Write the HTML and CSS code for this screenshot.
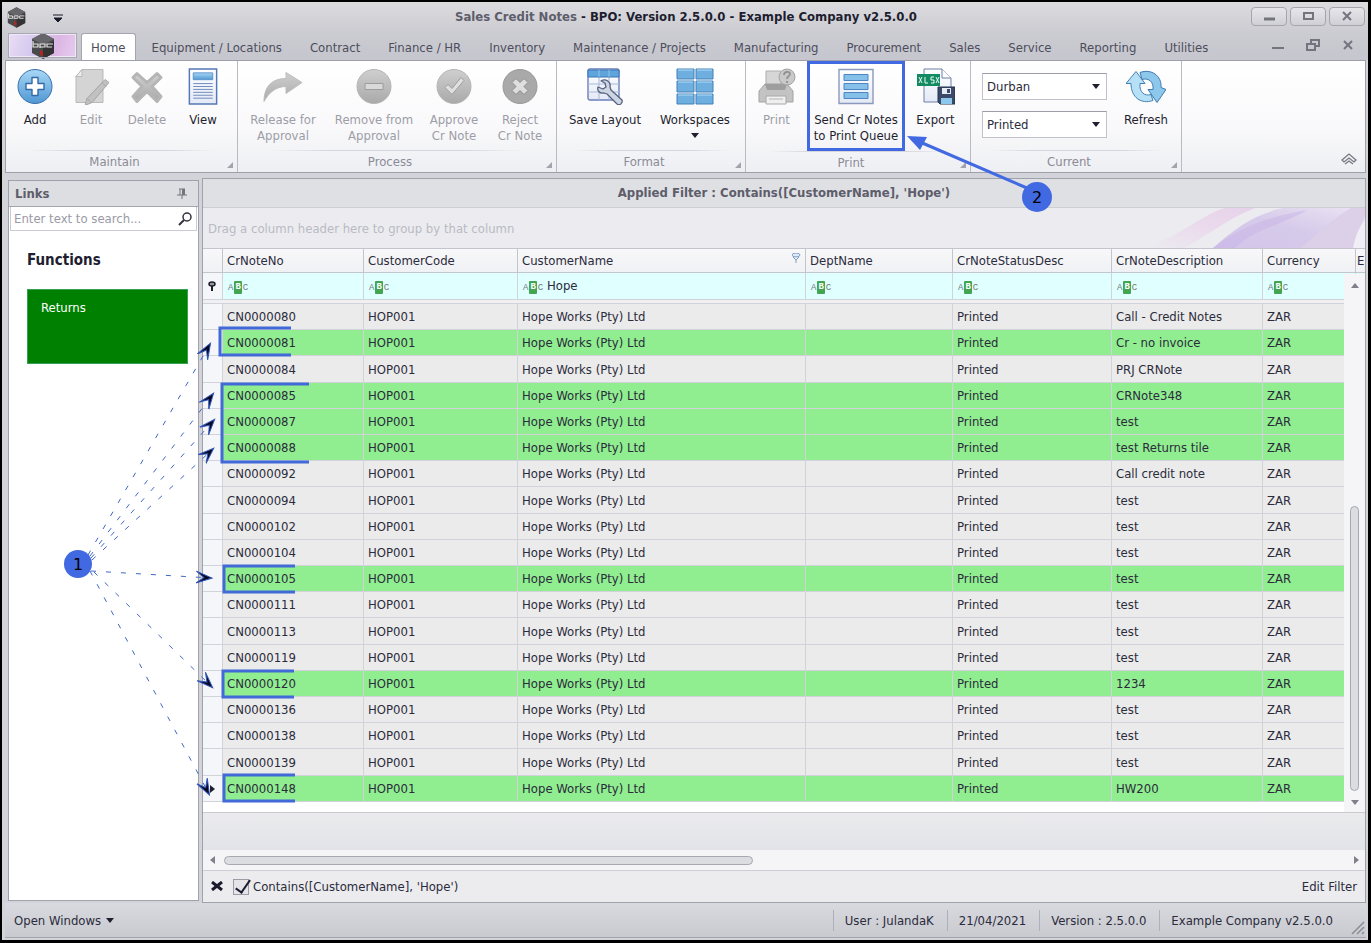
FILE: index.html
```html
<!DOCTYPE html>
<html lang="en">
  <head>
    <meta charset="UTF-8" />
    <meta name="viewport" content="width=device-width, initial-scale=1.0" />
    <title>Sales Credit Notes - BPO</title>
    <link rel="stylesheet" href="styles.css">
  </head>
  <body>
    <svg class="defs" width="0" height="0" aria-hidden="true">
      <defs>
        <linearGradient id="blue" x1="0" y1="0" x2="0" y2="1">
          <stop offset="0" stop-color="#a9d8f5" />
          <stop offset="1" stop-color="#4f97d3" />
        </linearGradient>
        <linearGradient id="gray" x1="0" y1="0" x2="0" y2="1">
          <stop offset="0" stop-color="#cfcfcf" />
          <stop offset="1" stop-color="#a9a9a9" />
        </linearGradient>
        <linearGradient id="paper" x1="0" y1="0" x2="0" y2="1">
          <stop offset="0" stop-color="#ffffff" />
          <stop offset="1" stop-color="#e3e9f6" />
        </linearGradient>
        <symbol id="logo" viewBox="0 0 24 26">
          <path d="M12 0 23 6v14l-11 6L1 20V6z" fill="#4a4a4c" />
          <path d="M12 0 23 6l-11 6L1 6z" fill="#66666a" />
          <path d="M12 14 23 8v12l-11 6z" fill="#333336" />
          <path d="M2 8v6h5v-3H2M9 15v-4h5v3H9M21 14h-5v-3h6" fill="none" stroke="#e4e4e4" stroke-width="1.2" />
          <path d="M9 17l3 2v4l-3-1z" fill="#b3261e" />
        </symbol>
      </defs>
    </svg>

    <div class="window">
      <header class="titlebar">
        <div class="quick">
          <svg width="19" height="21"><use href="#logo" /></svg>
          <svg width="10" height="8"><path d="M0 1h10M1 4h8L5 8z" fill="#1b1b2e" stroke="#1b1b2e" /></svg>
        </div>
        <h1><span>Sales Credit Notes</span> - BPO: Version 2.5.0.0 - Example Company v2.5.0.0</h1>
        <div class="win-buttons">
          <button aria-label="Minimize"><svg width="14" height="12"><path d="M2 9h11" stroke="#74747f" stroke-width="3" /></svg></button>
          <button aria-label="Maximize"><svg width="14" height="12"><path d="M3 3h9v6H3z" fill="none" stroke="#74747f" stroke-width="2" /></svg></button>
          <button aria-label="Close"><svg width="14" height="12"><path d="M3 2l8 8M11 2l-8 8" stroke="#74747f" stroke-width="2" /></svg></button>
        </div>
      </header>

      <nav class="tabs">
        <button class="app-button" aria-label="Application menu"><svg width="24" height="26"><use href="#logo" /></svg></button>
        <a href="#" class="active">Home</a>
        <a href="#">Equipment / Locations</a>
        <a href="#">Contract</a>
        <a href="#">Finance / HR</a>
        <a href="#">Inventory</a>
        <a href="#">Maintenance / Projects</a>
        <a href="#">Manufacturing</a>
        <a href="#">Procurement</a>
        <a href="#">Sales</a>
        <a href="#">Service</a>
        <a href="#">Reporting</a>
        <a href="#">Utilities</a>
        <div class="child-buttons">
          <button aria-label="Minimize child"><svg width="14" height="12"><path d="M1 9h12" stroke="#74747f" stroke-width="2" /></svg></button>
          <button aria-label="Restore child"><svg width="14" height="12"><path d="M5 4V1h8v6h-3M1 5h8v6H1z" fill="none" stroke="#74747f" stroke-width="2" /></svg></button>
          <button aria-label="Close child"><svg width="14" height="12"><path d="M3 2l8 8M11 2l-8 8" stroke="#74747f" stroke-width="2" /></svg></button>
        </div>
      </nav>

      <div class="ribbon">
        <section class="group maintain">
          <div class="items">
            <button class="small">
              <svg width="36" height="36" viewBox="0 0 36 36">
                <circle cx="18" cy="18" r="17" fill="url(#blue)" stroke="#3a6fae" />
                <path d="M15 9h6v6h6v6h-6v6h-6v-6H9v-6h6z" fill="#fff" stroke="#3569a8" stroke-width="1.4" stroke-linejoin="round" />
              </svg>
              Add
            </button>
            <button class="small" disabled>
              <svg width="36" height="36" viewBox="0 0 36 36">
                <path d="M9 1h21v33H3V8z" fill="#d4d4d4" stroke="#b9b9b9" />
                <path d="M3 8h6V1z" fill="#ededed" stroke="#b9b9b9" />
                <path d="M32 11l4 3-17 20-7 3 2-7z" fill="#c1c1c1" stroke="#a5a5a5" />
                <path d="M14 30l4 4M29 14l4 4" stroke="#a5a5a5" />
              </svg>
              Edit
            </button>
            <button class="small" disabled>
              <svg width="36" height="36" viewBox="0 0 36 36">
                <path d="M8 5l10 9 10-9 4 4-9 9 9 10-4 5-10-10L8 33l-4-5 9-10-9-9z" fill="url(#gray)" stroke="#b5b5b5" stroke-width="3" stroke-linejoin="round" />
              </svg>
              Delete
            </button>
            <button class="small">
              <svg width="36" height="38" viewBox="0 0 36 38">
                <path d="M4 1h28v36H4z" fill="url(#paper)" stroke="#5577b5" stroke-width="1.5" />
                <path d="M8 5h20v7H8z" fill="url(#blue)" stroke="#5b93cb" />
                <path d="M8 16h20M8 19h20M8 22h20M8 25h20M8 28h20M8 31h20" stroke="#7089bd" />
              </svg>
              View
            </button>
          </div>
          <h2>Maintain</h2>
        </section>

        <section class="group process">
          <div class="items">
            <button class="large" disabled>
              <svg width="40" height="36" viewBox="0 0 40 36">
                <path d="M1 33C1 17 10 10 23 10V4l16 10-16 11v-7C13 18 6 24 1 33z" fill="url(#gray)" stroke="#bdbdbd" />
              </svg>
              Release for<br />Approval
            </button>
            <button class="xlarge" disabled>
              <svg width="36" height="36" viewBox="0 0 36 36">
                <circle cx="18" cy="18" r="17" fill="url(#gray)" stroke="#b5b5b5" />
                <path d="M9 15h18v6H9z" fill="#d9d9d9" stroke="#9c9c9c" />
              </svg>
              Remove from<br />Approval
            </button>
            <button class="medium" disabled>
              <svg width="36" height="36" viewBox="0 0 36 36">
                <circle cx="18" cy="18" r="17" fill="url(#gray)" stroke="#b5b5b5" />
                <path d="M9 19l3-3 4 4 9-11 3 3-12 14z" fill="#e0e0e0" stroke="#9c9c9c" />
              </svg>
              Approve<br />Cr Note
            </button>
            <button class="medium" disabled>
              <svg width="36" height="36" viewBox="0 0 36 36">
                <circle cx="18" cy="18" r="17" fill="#a9a9a9" stroke="#999" />
                <path d="M14 10l4 4 4-4 4 4-4 4 4 4-4 4-4-4-4 4-4-4 4-4-4-4z" fill="#dedede" stroke="#8c8c8c" />
              </svg>
              Reject<br />Cr Note
            </button>
          </div>
          <h2>Process</h2>
        </section>

        <section class="group format">
          <div class="items">
            <button class="large">
              <svg width="36" height="37" viewBox="0 0 36 37">
                <rect x="1" y="1" width="31" height="31" rx="2" fill="url(#paper)" stroke="#6a80b8" stroke-width="1.4" />
                <path d="M1 16h31M1 24h31M12 1v31M22 1v31" stroke="#a9b8dc" />
                <path d="M1 2h31v7H1z" fill="#5fa5dc" stroke="#3e77b5" />
                <path d="M12 2v7M22 2v7" stroke="#8cc4ec" />
                <path d="M14 13c5-3 10 1 9 6l1 3 11 10c1 3-2 6-5 4L20 26l-3-1c-5 1-7-3-6-6l5 2 3-2-1-4z" fill="#cdd5e2" stroke="#566280" stroke-width="1.3" stroke-linejoin="round" />
              </svg>
              Save Layout
            </button>
            <button class="large">
              <svg width="38" height="37" viewBox="0 0 38 37">
                <path d="M1 1h17v10H1zM20 1h17v10H20zM1 13h17v11H1zM20 13h17v11H20zM1 26h17v10H1zM20 26h17v10H20z" fill="#6eafe0" stroke="#4180bb" />
                <path d="M2 2h15M21 2h15M2 14h15M21 14h15M2 27h15M21 27h15" stroke="#b4dcf5" />
              </svg>
              Workspaces
              <i class="arrow"></i>
            </button>
          </div>
          <h2>Format</h2>
        </section>

        <section class="group print">
          <div class="items">
            <button class="small" disabled>
              <svg width="38" height="37" viewBox="0 0 38 37">
                <path d="M8 3h15v15H8z" fill="#d6d6d6" stroke="#adadad" />
                <path d="M7 16h22l6 7v11H1V23z" fill="#c3c3c3" stroke="#a3a3a3" />
                <path d="M7 16h22l-2 6H9z" fill="#9e9e9e" />
                <path d="M8 28h20v8H8z" fill="#efefef" stroke="#a8a8a8" />
                <path d="M11 31h14" stroke="#b5b5b5" />
                <circle cx="29" cy="9" r="8" fill="#c9c9c9" stroke="#a3a3a3" />
                <path d="M26 7c0-4 6-4 6-1 0 2-3 2-3 5m0 2v2" fill="none" stroke="#8f8f8f" stroke-width="1.7" />
              </svg>
              Print
            </button>
            <button class="xlarge marked">
              <svg width="36" height="36" viewBox="0 0 36 36">
                <path d="M1 1h34v34H1z" fill="url(#paper)" stroke="#8a99bf" stroke-width="1.4" />
                <path d="M6 6h24v6H6zM6 15h24v6H6zM6 24h24v6H6z" fill="#84c0ea" stroke="#4d86c0" />
              </svg>
              Send Cr Notes<br />to Print Queue
            </button>
            <button class="small">
              <svg width="38" height="37" viewBox="0 0 38 37">
                <path d="M7 1h18l9 9v24H7z" fill="url(#paper)" stroke="#6f7fa8" />
                <path d="M25 1v9h9" fill="#fff" stroke="#6f7fa8" />
                <path d="M0 6h23v12H0z" fill="#148a63" />
                <path d="M2 9l3 6M5 9l-3 6M8 9v6h3M17 9h-3v3h3v3h-3M19 9l3 6M22 9l-3 6" fill="none" stroke="#e8fff6" />
                <path d="M21 19h17v17H23l-2-2z" fill="#3a4a68" stroke="#26334d" />
                <path d="M25 20h9v6h-9z" fill="#e6ebf4" />
                <path d="M30 21h3v4h-3z" fill="#3a4a68" />
                <path d="M24 30h11v6H24z" fill="#8cc7ee" />
              </svg>
              Export
            </button>
          </div>
          <h2>Print</h2>
        </section>

        <section class="group current">
          <div class="items">
            <div class="combos">
              <label class="combo"><select aria-label="Branch"><option>Durban</option></select></label>
              <label class="combo"><select aria-label="Status"><option>Printed</option></select></label>
            </div>
            <button class="medium">
              <svg width="40" height="36" viewBox="0 0 40 36">
                <path d="M10 3l9 12h-5c-1 9 5 13 11 11l2 6C15 36 5 29 5 15H0z" fill="#b5e0f5" stroke="#4381b4" stroke-linejoin="round" />
                <path d="M31 34l-9-13h5c1-8-5-12-11-10l-2-7C25 0 36 7 35 19l5 2z" fill="#8cc8ec" stroke="#3f78b0" stroke-linejoin="round" />
              </svg>
              Refresh
            </button>
          </div>
          <h2>Current</h2>
        </section>
        <button class="collapse" aria-label="Collapse ribbon">
          <svg width="16" height="12"><path d="M1 7l7-6 7 6-2 2-5-4-5 4zM4 11l4-3 4 3" fill="none" stroke="#777781" stroke-width="1.3" /></svg>
        </button>
      </div>

      <main class="workspace">
        <aside class="links">
          <div class="links-head">
            <h2>Links</h2>
            <svg width="10" height="12"><path d="M2 1h6M3 1v6M0 7h10M5 7v4" fill="none" stroke="#74747f" /><path d="M5 1h3v6H5z" fill="#74747f" /></svg>
          </div>
          <div class="search">
            <input type="text" placeholder="Enter text to search..." aria-label="Search links" />
            <svg width="14" height="14"><circle cx="9" cy="5" r="4" fill="none" stroke="#33333f" stroke-width="1.5" /><path d="M6 8l-5 5" stroke="#33333f" stroke-width="2" /></svg>
          </div>
          <h3>Functions</h3>
          <button class="tile">Returns</button>
        </aside>

        <section class="grid">
          <h2 class="applied">Applied Filter : Contains([CustomerName], 'Hope')</h2>
          <div class="group-bar">
            <span>Drag a column header here to group by that column</span>
            <svg width="240" height="40" viewBox="0 0 240 40">
              <defs>
                <linearGradient id="pink" x1="0" y1="1" x2="1" y2="0">
                  <stop offset="0" stop-color="#ececf0" />
                  <stop offset="0.6" stop-color="#ead8ec" />
                  <stop offset="1" stop-color="#e6d3ea" />
                </linearGradient>
                <linearGradient id="violet" x1="0" y1="1" x2="1" y2="0">
                  <stop offset="0" stop-color="#d3c5ea" />
                  <stop offset="0.5" stop-color="#d6caea" />
                  <stop offset="1" stop-color="#eae4f3" />
                </linearGradient>
              </defs>
              <path d="M20 40C60 25 80 5 100 0h30C105 10 85 25 60 40z" fill="url(#pink)" />
              <path d="M88 40C110 20 130 6 158 0h82v40z" fill="url(#violet)" />
              <path d="M88 40C120 15 150 8 182 2 160 16 130 20 110 40z" fill="#c7b4e6" opacity="0.5" />
              <path d="M176 40C196 22 212 8 226 0h14v8c-6 12-10 20-12 32z" fill="#dccfe8" />
              <path d="M228 40c2-12 6-20 12-28v28z" fill="#f1eef5" />
            </svg>
          </div>
          <div class="table-area">
            <table>
              <colgroup>
                <col class="c-mark" />
                <col class="c-no" />
                <col class="c-code" />
                <col />
                <col class="c-dept" />
                <col class="c-status" />
                <col class="c-desc" />
                <col class="c-cur" />
                <col class="c-last" />
              </colgroup>
              <thead>
                <tr>
                  <th></th>
                  <th>CrNoteNo</th>
                  <th>CustomerCode</th>
                  <th><div class="filtered">CustomerName <svg width="9" height="10"><ellipse cx="4" cy="2" rx="4" ry="2" fill="#dcebf8" stroke="#7f9cc0" /><path d="M1 4l3 3 3-3M4 6v4" fill="none" stroke="#7f9cc0" /></svg></div></th>
                  <th>DeptName</th>
                  <th>CrNoteStatusDesc</th>
                  <th>CrNoteDescription</th>
                  <th>Currency</th>
                  <th>E</th>
                </tr>
                <tr class="filter-row">
                  <td><svg width="8" height="10"><ellipse cx="4" cy="3" rx="3" ry="2" fill="#999" stroke="#1b1b2e" stroke-width="1.5" /><path d="M4 5v5" stroke="#1b1b2e" stroke-width="2" /></svg></td>
                  <td><span class="abc">A<b>B</b>C</span></td>
                  <td><span class="abc">A<b>B</b>C</span></td>
                  <td><span class="abc">A<b>B</b>C</span> Hope</td>
                  <td><span class="abc">A<b>B</b>C</span></td>
                  <td><span class="abc">A<b>B</b>C</span></td>
                  <td><span class="abc">A<b>B</b>C</span></td>
                  <td><span class="abc">A<b>B</b>C</span></td>
                  <td></td>
                </tr>
                <tr class="split"><td colspan="9"></td></tr>
              </thead>
              <tbody id="notes"></tbody>
            </table>
            <div class="vscroll"><i class="up"></i><div class="thumb"></div><i class="down"></i></div>
          </div>
          <div class="summary"></div>
          <div class="hscroll"><i class="left"></i><div class="thumb"></div><i class="right"></i></div>
          <div class="filter-panel">
            <button aria-label="Clear filter"><svg width="12" height="10"><path d="M1 1l10 8M11 1L1 9" stroke="#1b1b2e" stroke-width="3" /></svg></button>
            <label><input type="checkbox" checked /> Contains([CustomerName], 'Hope')</label>
            <a href="#">Edit Filter</a>
          </div>
        </section>
      </main>

      <footer class="status">
        <button>Open Windows <i class="arrow"></i></button>
        <span>User : JulandaK</span>
        <span>21/04/2021</span>
        <span>Version : 2.5.0.0</span>
        <span>Example Company v2.5.0.0</span>
        <svg width="14" height="14"><path d="M1 13L13 1M6 13l7-7M11 13l2-2" stroke="#8c8c96" stroke-width="1.5" /></svg>
      </footer>
    </div>

    <!-- help callouts drawn over the window -->
    <svg class="callouts" width="1371" height="943" viewBox="0 0 1371 943">
      <defs>
        <marker id="dart" markerWidth="18" markerHeight="16" refX="15" refY="8" orient="auto" markerUnits="userSpaceOnUse">
          <path d="M0 2l16 6-16 6 8-6z" fill="#06061e" stroke="#2f55b8" />
        </marker>
      </defs>
      <g class="brackets">
        <path d="M291 328h-71v27h71" />
        <path d="M309 384h-87v78h87" />
        <path d="M295 566h-71v26h71" />
        <path d="M294 671h-71v26h71" />
        <path d="M295 775h-71v26h71" />
      </g>
      <g class="dashes">
        <path d="M88 555L210 344" />
        <path d="M90 556L213 394" />
        <path d="M91 558L214 420" />
        <path d="M92 560L213 449" />
        <path d="M91 571L211 578" />
        <path d="M94 572L212 687" />
        <path d="M90 571L209 794" />
      </g>
      <path d="M1027 188L920 142" stroke="#4169e1" stroke-width="3" />
      <path d="M907 136l20 1-7 13z" fill="#4169e1" />
      <circle cx="78" cy="564" r="14" />
      <circle cx="1037" cy="197" r="15" />
      <text x="78" y="570">1</text>
      <text x="1037" y="203">2</text>
    </svg>

    <script>
      const notes = [
        ["CN0000080", "Call - Credit Notes"],
        ["CN0000081", "Cr - no invoice", true],
        ["CN0000084", "PRJ CRNote"],
        ["CN0000085", "CRNote348", true],
        ["CN0000087", "test", true],
        ["CN0000088", "test Returns tile", true],
        ["CN0000092", "Call credit note"],
        ["CN0000094", "test"],
        ["CN0000102", "test"],
        ["CN0000104", "test"],
        ["CN0000105", "test", true],
        ["CN0000111", "test"],
        ["CN0000113", "test"],
        ["CN0000119", "test"],
        ["CN0000120", "1234", true],
        ["CN0000136", "test"],
        ["CN0000138", "test"],
        ["CN0000139", "test"],
        ["CN0000148", "HW200", true],
      ];

      document.getElementById("notes").innerHTML = notes
        .map(([no, desc, selected], i) => `
          <tr class="${selected ? "selected" : ""}">
            <td>${i === notes.length - 1 ? '<i class="current-row"></i>' : ""}</td>
            <td>${no}</td>
            <td>HOP001</td>
            <td>Hope Works (Pty) Ltd</td>
            <td></td>
            <td>Printed</td>
            <td>${desc}</td>
            <td>ZAR</td>
            <td></td>
          </tr>`)
        .join("");
    </script>
  </body>
</html>
```
FILE: styles.css
```css
* {
  box-sizing: border-box;
}

body {
  margin: 0;
  min-height: 100vh;
  display: flex;
  background: #000;
  color: #2b2b3b;
  font-family: "DejaVu Sans Condensed", "Noto Sans", sans-serif;
  font-size: 13px;
  position: relative;
}

h1,
h2,
h3 {
  margin: 0;
  font-size: 13px;
}

button {
  font: inherit;
  color: inherit;
  border: 0;
  padding: 0;
  background: none;
}

a {
  color: inherit;
  text-decoration: none;
}

.defs {
  position: absolute;
}

.window {
  flex: 1;
  display: flex;
  flex-direction: column;
  min-width: 0;
  margin: 2px 3px 3px 2px;
  padding: 0 2px 2px 3px;
  background: #d3d4da;
}

/* title bar */
.titlebar {
  display: grid;
  grid-template-columns: 1fr auto 1fr;
  align-items: center;
  height: 31px;
  margin: 0 -2px 0 -3px;
  padding: 0 3px 0 5px;
  background: linear-gradient(#dcdcdf, #cbcbd1);
}

.titlebar h1 {
  color: #1e1e30;
  line-height: 16px;
  padding-bottom: 2px;
}

.titlebar h1 span {
  color: #5d5d6b;
}

.quick {
  display: flex;
  align-items: center;
  gap: 27px;
}

.win-buttons {
  display: flex;
  justify-content: flex-end;
  gap: 3px;
  padding-bottom: 3px;
}

.win-buttons button {
  width: 36px;
  height: 19px;
  border: 1px solid #a5a5ae;
  border-radius: 4px;
  background: linear-gradient(#e6e6ea, #cfcfd5);
}

.win-buttons svg {
  display: block;
  margin: 0 auto;
}

/* ribbon tabs */
.tabs {
  display: flex;
  height: 27px;
  margin: 0 -2px 0 -3px;
  padding: 0 13px 0 6px;
  background: linear-gradient(#cbcbd1, #c5c6ce);
  color: #4d4d5c;
}

.tabs a {
  padding: 0 14px;
  line-height: 30px;
  white-space: nowrap;
}

.tabs .active {
  padding: 0 9px;
  margin-right: 2px;
  line-height: 28px;
  background: #fff;
  border: 1px solid #a5a5b0;
  border-bottom: 0;
  border-radius: 3px 3px 0 0;
}

.app-button {
  width: 69px;
  height: 25px;
  margin-right: 4px;
  border: 2px solid #f0e6f6;
  outline: 1px solid #a8a8b4;
  outline-offset: -1px;
  background: linear-gradient(110deg, #e8dcf4, #d3c7ee 40%, #dcb6e4 70%, #e6cbee);
}

.app-button svg {
  display: block;
  margin: -2px auto;
}

.child-buttons {
  display: flex;
  align-items: center;
  gap: 21px;
  margin-left: auto;
}

/* ribbon */
.ribbon {
  display: flex;
  height: 113px;
  border: 1px solid #a0a0ac;
  background: linear-gradient(#fff, #f9f9fb 60%, #eeeff3);
}

.group {
  position: relative;
  display: flex;
  flex-direction: column;
  border-right: 1px solid #b9bac4;
}

.group::after {
  content: "";
  position: absolute;
  right: 4px;
  bottom: 4px;
  border: 3px solid #a3a3ad;
  border-top-color: transparent;
  border-left-color: transparent;
}

.group h2 {
  padding-right: 14px;
  border-top: 1px solid;
  border-image: linear-gradient(90deg, transparent 10%, #d4d4dc 30%, #d4d4dc 70%, transparent 90%) 1;
  font-weight: normal;
  line-height: 21px;
  text-align: center;
  color: #8b8b97;
}

.items {
  display: flex;
  flex: 1;
}

.maintain .items {
  padding: 0 6px 0 1px;
}

.process .items {
  padding: 0 3px 0 1px;
}

.format .items {
  gap: 2px;
  padding: 0 6px 0 4px;
}

.print .items {
  padding-right: 4px;
}

.current .items {
  padding: 0 2px 0 11px;
}

.items button {
  display: flex;
  flex-direction: column;
  align-items: center;
  padding-top: 7px;
  line-height: 16px;
  white-space: nowrap;
  color: #1f1f30;
}

.items button:disabled {
  color: #9d9da6;
}

.items button svg {
  height: 37px;
  margin-bottom: 7px;
}

.items .small {
  width: 56px;
}

.items .medium {
  width: 66px;
}

.items .large {
  width: 88px;
}

.items .xlarge {
  width: 94px;
}

.print .items .small {
  width: 61px;
}

.items .marked {
  width: 98px;
  height: 90px;
  padding-top: 4px;
  border: 3px solid #4169e1;
}

.arrow,
.down,
.up,
.left,
.right,
.current-row {
  display: inline-block;
  border: 4px solid transparent;
}

.arrow {
  border-top: 5px solid #1f1f30;
  border-bottom: 0;
}

.items .arrow {
  margin-top: 5px;
}

.down {
  border-top: 5px solid #80808c;
  border-bottom: 0;
}

.up {
  border-bottom: 5px solid #80808c;
  border-top: 0;
}

.left {
  border-right: 5px solid #80808c;
  border-left: 0;
}

.right {
  border-left: 5px solid #80808c;
  border-right: 0;
}

.current-row {
  border-left: 5px solid #1f1f30;
  border-right: 0;
}

.combos {
  display: flex;
  flex-direction: column;
  gap: 11px;
  padding-top: 12px;
  margin-right: 6px;
}

.combo {
  position: relative;
}

.combo::after {
  content: "";
  position: absolute;
  right: 7px;
  top: 11px;
  border: 4px solid transparent;
  border-top: 5px solid #1f1f30;
  border-bottom: 0;
}

.combo select {
  display: block;
  width: 125px;
  height: 27px;
  padding: 0 4px;
  appearance: none;
  border: 1px solid #c0c1ca;
  border-top-color: #9c9da8;
  border-radius: 0;
  background: #fff;
  color: inherit;
  font: inherit;
}

.collapse {
  align-self: flex-end;
  margin: 0 8px 4px auto;
}

/* work area */
.workspace {
  flex: 1;
  display: flex;
  gap: 3px;
  padding: 5px 0 0 3px;
}

.links {
  display: flex;
  flex-direction: column;
  flex: 0 0 191px;
  margin: 2px 0;
  border: 1px solid #9fa1ac;
  background: #fff;
}

.links-head {
  display: flex;
  align-items: center;
  justify-content: space-between;
  height: 26px;
  padding: 0 11px 0 6px;
  border-bottom: 1px solid #a3a4ae;
  background: #dddee2;
  color: #5d5d6b;
}

.search {
  display: flex;
  align-items: center;
  height: 24px;
  margin: 0 1px;
  padding: 0 4px 0 3px;
  border: 1px solid #c9cad2;
  border-top: 0;
}

.search input {
  flex: 1;
  min-width: 0;
  padding: 0;
  border: 0;
  outline: 0;
  font: inherit;
}

.search input::placeholder {
  color: #9a9aa6;
}

.links h3 {
  margin: 18px;
  font-size: 15px;
  line-height: 22px;
  color: #1e1e30;
}

.tile {
  height: 75px;
  margin: 0 10px 0 18px;
  padding: 10px 13px;
  display: flex;
  border: 1px solid #36a154;
  background: #008000;
  color: #fff;
}

.grid {
  flex: 1;
  min-width: 0;
  display: flex;
  flex-direction: column;
  border: 1px solid #9fa1ac;
  background: #fff;
}

.applied {
  height: 29px;
  line-height: 27px;
  border-bottom: 1px solid #cdced4;
  background: #dfe0e4;
  text-align: center;
  color: #5d5d6b;
}

.group-bar {
  display: flex;
  justify-content: space-between;
  height: 40px;
  padding-left: 5px;
  background: #ececf0;
  color: #b9bac3;
}

.group-bar span {
  line-height: 42px;
}

.table-area {
  position: relative;
  flex: 1;
  padding-bottom: 10px;
  display: flex;
}

table {
  width: 100%;
  table-layout: fixed;
  border-collapse: separate;
  border-spacing: 0;
}

.c-mark {
  width: 20px;
}

.c-no {
  width: 141px;
}

.c-code {
  width: 154px;
}

.c-dept {
  width: 147px;
}

.c-status {
  width: 159px;
}

.c-desc {
  width: 151px;
}

.c-cur {
  width: 93px;
}

.c-last {
  width: 9px;
}

th,
td {
  padding: 0 0 0 4px;
  border-right: 1px solid #d2d3da;
  border-bottom: 1px solid #d2d3da;
  text-align: left;
  font-weight: normal;
  white-space: nowrap;
  overflow: hidden;
}

th {
  height: 25px;
  border-top: 1px solid #c3c4cc;
  border-color: #c3c4cc;
  background: linear-gradient(#f8f8fa, #f0f1f4);
}

th:last-child,
td:last-child {
  padding-left: 1px;
  border-right: 0;
}

.filtered {
  display: flex;
  justify-content: space-between;
  padding-right: 4px;
}

.filter-row td {
  height: 27px;
  background: #e0ffff;
}

.filter-row td:first-child {
  padding-left: 5px;
  background: #f5f6f9;
}

.split td {
  height: 4px;
  padding: 0;
  background: #f0f0f3;
}

tbody td {
  background: #ebebeb;
}

.selected td {
  background: #90ee90;
}

tbody td:first-child {
  padding-left: 7px;
  background: #f5f6f9;
}

.abc {
  display: inline-flex;
  align-items: center;
  gap: 1px;
  margin-left: 1px;
  font-family: "Liberation Mono", monospace;
  font-size: 9px;
  color: #6e7a78;
}

.abc b {
  padding: 0 1px;
  line-height: 13px;
  border-radius: 1px;
  background: #43a551;
  color: #fff;
}

.vscroll {
  position: absolute;
  top: 26px;
  right: 0;
  bottom: 0;
  width: 21px;
  display: flex;
  flex-direction: column;
  align-items: center;
  justify-content: flex-end;
  padding: 9px 0 7px;
  background: #f5f5f8;
}

.vscroll .up {
  margin-bottom: auto;
}

.vscroll .thumb {
  width: 9px;
  height: 285px;
  margin-bottom: 9px;
}

.thumb {
  border: 1px solid #a7a8b2;
  border-radius: 5px;
  background: #dcdde1;
}

.summary {
  height: 38px;
  border-top: 1px solid #c9cad1;
  background: linear-gradient(#ebebee, #e2e3e8);
}

.hscroll {
  display: flex;
  align-items: center;
  height: 20px;
  padding: 0 6px 0 7px;
  background: #f5f5f8;
}

.hscroll .thumb {
  width: 46%;
  height: 9px;
  margin: 0 auto 0 9px;
}

.filter-panel {
  display: flex;
  align-items: center;
  gap: 10px;
  height: 32px;
  padding: 0 8px;
  border-top: 1px solid #cdced5;
  background: #ececef;
}

.filter-panel label {
  display: flex;
  align-items: center;
  gap: 4px;
}

.filter-panel input {
  appearance: none;
  width: 16px;
  height: 16px;
  margin: 0;
  border: 1px solid #9b9ca8;
  background: #e4e4e9;
}

.filter-panel input:checked::before {
  content: "";
  display: block;
  width: 6px;
  height: 14px;
  margin: -3px 0 0 5px;
  border: solid #1b1b2e;
  border-width: 0 2px 2px 0;
  transform: rotate(35deg);
}

.filter-panel a {
  margin-left: auto;
}

/* status bar */
.status {
  display: flex;
  align-items: center;
  height: 35px;
  border-bottom: 1px solid #a3a4ae;
  background: linear-gradient(#d9dadf, #c9cad0);
}

.status button {
  display: flex;
  align-items: center;
  gap: 5px;
  margin: 0 auto 0 9px;
}

.status span {
  padding: 3px 13px 3px 11px;
  border-left: 1px solid #aeafb8;
}

.status svg {
  align-self: flex-end;
  margin: 0 1px 2px 5px;
}

/* callouts */
.callouts {
  position: absolute;
  top: 0;
  left: 0;
  pointer-events: none;
}

.callouts circle {
  fill: #4169e1;
}

.callouts text {
  font-family: "DejaVu Sans", sans-serif;
  font-size: 16px;
  text-anchor: middle;
  fill: #000;
}

.brackets path {
  fill: none;
  stroke: #4169d8;
  stroke-width: 3px;
}

.dashes path {
  fill: none;
  stroke: #4066c8;
  stroke-dasharray: 5 10;
  marker-end: url(#dart);
}
```
